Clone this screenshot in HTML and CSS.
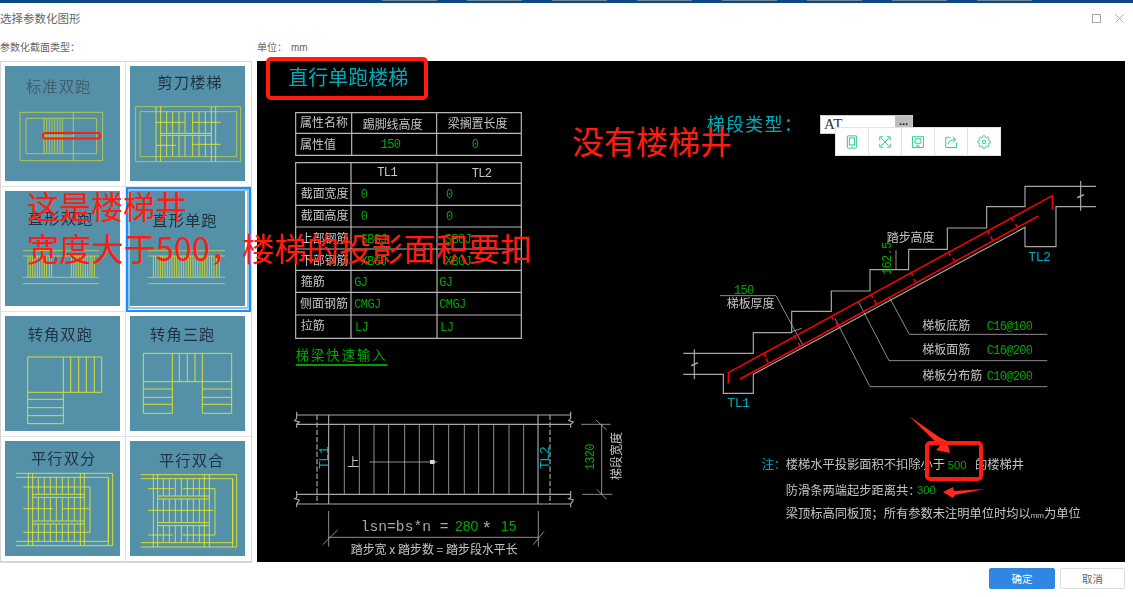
FILE: index.html
```html
<!DOCTYPE html>
<html lang="zh-CN">
<head>
<meta charset="utf-8">
<title>选择参数化图形</title>
<link rel="stylesheet" href="styles.css">
</head>
<body>
<div class="dialog">
  <div class="topstrip"><i></i><i></i><i></i><i></i><i></i><i></i><i></i><i></i></div>
  <header class="titlebar">
    <span class="dialog-title">选择参数化图形</span>
    <div class="winctl">
      <span class="win-max"></span>
      <svg class="win-close" viewBox="0 0 10 10"><path d="M0.5 0.5L9.5 9.5M9.5 0.5L0.5 9.5"/></svg>
    </div>
  </header>
  <div class="labels">
    <span class="label-left">参数化截面类型：</span>
    <span class="label-unit">单位：<span class="unit-value">mm</span></span>
  </div>
  <main class="body-row">
    <section class="types">
      <div class="type"><svg class="thumb" viewBox="15 198 345 345">
        <text class="th faded" x="176" y="277" text-anchor="middle">标准双跑</text>
        <path class="yl soft" d="M60 337H308V482H60ZM78 355H290V461H78ZM220 337V482M132 355V461M140 355V461M148 355V461M156 355V461M164 355V461M172 355V461M180 355V461M187 355V461M132 408H220"/>
      </svg></div>
      <div class="type"><svg class="thumb" viewBox="390 198 345 345">
        <text class="th" x="570" y="265" text-anchor="middle">剪刀楼梯</text>
        <path class="yl soft" d="M407 320H722V485H407ZM420 335H710V470H420Z"/>
        <path class="yl" d="M468 320V485M482 320V485M634 320V485M647 320V485M482 400H634M482 406H634M500 335V400M518 335V400M537 335V400M555 335V400M578 335V400M597 335V400M616 335V400M500 406V470M518 406V470M537 406V470M555 406V470M578 406V470M597 406V470M616 406V470M468 367H555M578 367H662M468 436H528M578 433H662"/>
      </svg></div>
      <div class="type"><svg class="thumb" viewBox="15 573 345 345">
        <text class="th" x="182" y="672" text-anchor="middle">直形双跑</text>
        <path class="yl soft" d="M68 752H297M68 768H297M68 832H297M68 851H297"/>
        <path class="yl dense" d="M84 768V832M91 768V832M98 768V832M105 768V832M112 768V832M119 768V832M126 768V832M133 768V832M140 768V832M148 768V832M155 768V832M214 768V832M221 768V832M228 768V832M235 768V832M242 768V832M249 768V832M256 768V832M263 768V832M270 768V832M276 768V832M283 768V832"/>
      </svg></div>
      <div class="type selected"><svg class="thumb" viewBox="390 573 345 345">
        <text class="th" x="555" y="677" text-anchor="middle">直形单跑</text>
        <path class="yl soft" d="M443 752H675M443 768H675M443 832H675M443 851H675"/>
        <path class="yl dense" d="M460 768V832M467 768V832M474 768V832M481 768V832M488 768V832M495 768V832M502 768V832M509 768V832M516 768V832M523 768V832M530 768V832M537 768V832M544 768V832M551 768V832M558 768V832M565 768V832M572 768V832M579 768V832M586 768V832M593 768V832M600 768V832M607 768V832M614 768V832M621 768V832M628 768V832M635 768V832M642 768V832M650 768V832M658 768V832"/>
      </svg></div>
      <div class="type"><svg class="thumb" viewBox="15 48 345 345">
        <text class="th" x="181" y="119" text-anchor="middle">转角双跑</text>
        <path class="yl" d="M83 171H305V277H83ZM190 171V277M212 171V277M236 171V277M259 171V277M283 171V277M83 277V371H190V277M83 298H190M83 323H190M83 347H190"/>
      </svg></div>
      <div class="type"><svg class="thumb" viewBox="390 48 345 345">
        <text class="th" x="548" y="119" text-anchor="middle">转角三跑</text>
        <path class="yl" d="M430 160H695V245H430ZM517 160V245M538 160V245M562 160V245M585 160V245M607 160V245M430 245V340H517V245M430 267H517M430 292H517M430 313H517M607 245V340H695V245M607 267H695M607 292H695M607 313H695"/>
      </svg></div>
      <div class="type"><svg class="thumb" viewBox="15 423 345 345">
        <text class="th" x="191" y="493" text-anchor="middle">平行双分</text>
        <path class="yl" d="M48 520H338V737H48M48 532H325V724H48M325 532V737M85 520V737M98 520V737M241 520V737M253 520V737M115 532V583M133 532V583M151 532V583M169 532V583M187 532V583M205 532V583M223 532V583M115 592V663M133 592V663M151 592V663M169 592V663M187 592V663M205 592V663M223 592V663M115 672V724M133 672V724M151 672V724M169 672V724M187 672V724M205 672V724M223 672V724M70 561H270V697H70M98 583H253M98 592H253M98 663H253M98 672H253M70 626H160M187 626H268"/>
      </svg></div>
      <div class="type"><svg class="thumb" viewBox="390 423 345 345">
        <text class="th" x="575" y="497" text-anchor="middle">平行双合</text>
        <path class="yl" d="M422 524H710V741H422M422 536H698V728H422M698 536V741M460 524V741M473 524V741M613 524V741M628 524V741M490 536V588M508 536V588M526 536V588M544 536V588M562 536V588M580 536V588M598 536V588M490 597V668M508 597V668M526 597V668M544 597V668M562 597V668M580 597V668M598 597V668M490 677V728M508 677V728M526 677V728M544 677V728M562 677V728M580 677V728M598 677V728M445 566H522M548 566H645V705H548M445 705H518M473 588H628M473 597H628M473 668H628M473 677H628M445 631H640"/>
      </svg></div>
    </section>
    <section class="canvas">
      <svg class="drawing" viewBox="257 61 868 501">
        <g transform="translate(260 50) scale(.33333)">
          <text class="cy big" x="85" y="105">直行单跑楼梯</text>
          <path class="grid" d="M107 188H784V316H107ZM275 188V316M530 188V316M107 250H784"/>
          <text class="wt" x="120" y="232">属性名称</text>
          <text class="wt" x="308" y="238">踢脚线高度</text>
          <text class="wt" x="563" y="235">梁搁置长度</text>
          <text class="wt" x="120" y="296">属性值</text>
          <text class="gn mono" x="362" y="294">150</text>
          <text class="gn mono" x="635" y="294">0</text>
          <path class="grid" d="M107 338H784V865H107ZM273 338V865M531 338V865M107 400H784M107 466H784M107 531H784M107 597H784M107 661H784M107 727H784M107 795H784"/>
          <text class="wm mono" x="352" y="379">TL1</text>
          <text class="wm mono" x="635" y="382">TL2</text>
          <text class="wt" x="122" y="443">截面宽度</text>
          <text class="gn mono" x="302" y="443">0</text>
          <text class="gn mono" x="558" y="443">0</text>
          <text class="wt" x="122" y="509">截面高度</text>
          <text class="gn mono" x="302" y="509">0</text>
          <text class="gn mono" x="558" y="509">0</text>
          <text class="wt" x="122" y="578">上部钢筋</text>
          <text class="gn mono" x="302" y="578">SBGJ</text>
          <text class="gn mono" x="555" y="578">SBGJ</text>
          <text class="wt" x="122" y="644">下部钢筋</text>
          <text class="gn mono" x="302" y="644">XBGJ</text>
          <text class="gn mono" x="555" y="644">XBGJ</text>
          <text class="wt" x="122" y="709">箍筋</text>
          <text class="gn mono" x="283" y="707">GJ</text>
          <text class="gn mono" x="538" y="707">GJ</text>
          <text class="wt" x="120" y="775">侧面钢筋</text>
          <text class="gn mono" x="283" y="775">CMGJ</text>
          <text class="gn mono" x="538" y="775">CMGJ</text>
          <text class="wt" x="122" y="841">拉筋</text>
          <text class="gn mono" x="285" y="842">LJ</text>
          <text class="gn mono" x="541" y="842">LJ</text>
          <text class="gn quick" x="107" y="931">梯梁快速输入</text>
          <path class="under" d="M107 945H382"/>
        </g>
        <g transform="translate(270 390) scale(.33333)">
          <path class="cad" d="M80 75H902M80 103H902M80 313H902M80 342H902M176 75V342M804 75V342M80 65V85L74 92L88 96L80 103V113M80 303V323L74 326L88 330L80 342V352M902 65V85L896 92L910 96L902 103V113M902 303V323L896 326L910 330L902 342V352"/>
          <path class="cad dash" d="M141 75V342M840 75V342"/>
          <path class="cad thin" d="M223 103V313M268 103V313M312 103V313M356 103V313M404 103V313M448 103V313M491 103V313M536 103V313M583 103V313M626 103V313M671 103V313M717 103V313M761 103V313M298 216H503M933 103H1022M937 313H1027M995 103V313M978 90L1010 120M980 298L1010 328M176 363V470M805 363V470M176 442H805M158 464L203 420M790 464L822 424"/>
          <rect class="pt" x="480" y="210" width="14" height="12"/>
          <text class="wt" x="232" y="232">上</text>
          <text class="cy mono tl" transform="translate(175 237) rotate(-90)">TL1</text>
          <text class="cy mono tl" transform="translate(838 237) rotate(-90)">TL2</text>
          <text class="gn mono" transform="translate(973 241) rotate(-90)">1320</text>
          <text class="wt" transform="translate(1054 270) rotate(-90)">梯段宽度</text>
          <text class="formula-mono fg" x="272" y="423">lsn=bs*n =</text>
          <text class="formula gn" x="555" y="423">280</text>
          <text class="formula star fg" x="640" y="432">*</text>
          <text class="formula gn" x="693" y="423">15</text>
          <text class="wt" x="242" y="491">踏步宽 x 踏步数 = 踏步段水平长</text>
        </g>
        <g transform="translate(670 100) scale(.33333)">
          <text class="cy seg" x="110" y="92">梯段类型：</text>
          <path class="cad" d="M40 760H250V698H365V634H484V573H600V509H716V448H832V384H950V320H1065V259H1278M40 823H160V880H250V823L1065 382V440H1158V320H1278M73 748V838M64 798L84 788L64 796M1232 243V332M1222 294L1242 284L1222 292"/>
          <path class="cad thin" d="M150 587H318L400 738M365 695L395 685M495 655L600 860H1132M565 605L657 782H1132M657 590L718 703H1132M678 450V507"/>
          <path class="rb" d="M175 850V818L1147 287V328M210 837L1105 348"/>
          <path class="rd" d="M282 760L288 772M288 776L295 788M372 706L378 718M385 729L392 741M484 648L490 660M499 669L505 681M602 582L608 594M613 600L619 612M722 515L728 527M732 537L738 549M835 455L841 467M849 474L855 486M952 391L958 403M962 409L968 421M1024 351L1030 363M1037 372L1043 384"/>
          <text class="wt" x="650" y="426">踏步高度</text>
          <text class="gn mono" transform="translate(663 525) rotate(-90)">162.5</text>
          <text class="gn mono" x="192" y="582">150</text>
          <text class="wt" x="170" y="623">梯板厚度</text>
          <text class="wt" x="757" y="690">梯板底筋</text>
          <text class="gn mono" x="950" y="689">C16@100</text>
          <text class="wt" x="757" y="761">梯板面筋</text>
          <text class="gn mono" x="950" y="763">C16@200</text>
          <text class="wt" x="757" y="841">梯板分布筋</text>
          <text class="gn mono" x="950" y="841">C10@200</text>
          <text class="cy mono tl" x="172" y="921">TL1</text>
          <text class="cy mono tl" x="1075" y="483">TL2</text>
        </g>
        <g transform="translate(740 405) scale(.33333)">
          <text class="cy note" x="65" y="193">注：</text>
          <text class="wt note" x="137" y="193">楼梯水平投影面积不扣除小于</text>
          <text class="gn latin" x="623" y="191">500</text>
          <text class="wt note" x="705" y="193">的楼梯井</text>
          <text class="wt note" x="137" y="269">防滑条两端起步距离共：</text>
          <text class="gn latin" x="531" y="267">300</text>
          <text class="wt note" x="137" y="340">梁顶标高同板顶；所有参数未注明单位时均以<tspan class="narrow">mm</tspan>为单位</text>
        </g>
      </svg>
      <div class="segtype">
        <span class="segvalue">AT</span>
        <span class="segmore">...</span>
      </div>
      <div class="toolbar">
        <span class="tool"><svg viewBox="0 0 24 24"><rect x="4" y="1.500" width="16" height="21" rx="1"/><rect x="7.500" y="5" width="9" height="12"/><path d="M11 20H13"/></svg></span>
        <span class="tool"><svg viewBox="0 0 24 24"><path d="M5 5L19 19M19 5L5 19M3 9V3H9M15 3H21V9M21 15V21H15M9 21H3V15"/></svg></span>
        <span class="tool"><svg viewBox="0 0 24 24"><path d="M2.500 3H21.500V21.500H2.500ZM7 6.500H17V14H7ZM10 21.500V17.500H13.500V21.500"/></svg></span>
        <span class="tool"><svg viewBox="0 0 24 24"><path d="M11 4H3V21.500H21.500V13M7 16C8 10 12 8 19 8M15 3L20.500 8L15 13"/></svg></span>
        <span class="tool"><svg viewBox="0 0 24 24"><circle cx="12" cy="12" r="3"/><path d="M19.4 15a1.65 1.65 0 0 0 .33 1.82l.06.06a2 2 0 0 1 0 2.83 2 2 0 0 1-2.83 0l-.06-.06a1.65 1.65 0 0 0-1.82-.33 1.65 1.65 0 0 0-1 1.51V21a2 2 0 0 1-2 2 2 2 0 0 1-2-2v-.09A1.65 1.65 0 0 0 9 19.4a1.65 1.65 0 0 0-1.82.33l-.06.06a2 2 0 0 1-2.83 0 2 2 0 0 1 0-2.83l.06-.06a1.65 1.65 0 0 0 .33-1.82 1.65 1.65 0 0 0-1.51-1H3a2 2 0 0 1-2-2 2 2 0 0 1 2-2h.09A1.65 1.65 0 0 0 4.6 9a1.65 1.65 0 0 0-.33-1.82l-.06-.06a2 2 0 0 1 0-2.83 2 2 0 0 1 2.83 0l.06.06a1.65 1.65 0 0 0 1.82.33H9a1.65 1.65 0 0 0 1-1.51V3a2 2 0 0 1 2-2 2 2 0 0 1 2 2v.09a1.65 1.65 0 0 0 1 1.51 1.65 1.65 0 0 0 1.82-.33l.06-.06a2 2 0 0 1 2.83 0 2 2 0 0 1 0 2.83l-.06.06a1.65 1.65 0 0 0-.33 1.82V9a1.65 1.65 0 0 0 1.51 1H21a2 2 0 0 1 2 2 2 2 0 0 1-2 2h-.09a1.65 1.65 0 0 0-1.51 1z"/></svg></span>
      </div>
    </section>
  </main>
  <footer class="actions">
    <button class="btn primary" type="button">确定</button>
    <button class="btn" type="button">取消</button>
  </footer>
  <svg class="annotations" viewBox="0 0 1133 597">
    <rect class="mark" x="43" y="133" width="57" height="5.500" rx="2"/>
    <rect class="mark thick" x="268" y="59" width="158" height="39" rx="3"/>
    <path class="mark-fill" d="M909 416L939 437L947 441L950 453L936 450L940 446Z"/>
    <path class="mark-fill" d="M985 489L954 491L953 487L943 492L953 498L955 495Z"/>
    <rect class="mark thick" x="927" y="443" width="54" height="36" rx="3"/>
    <text class="red" x="572" y="154">没有楼梯井</text>
    <text class="red" x="27" y="219">这是楼梯井</text>
    <text class="red wide" x="27" y="261">宽度大于500，楼梯的投影面积要扣</text>
  </svg>
</div>
</body>
</html>
```
FILE: styles.css
```css
* { box-sizing: border-box; }
html, body { margin: 0; padding: 0; background: #fff; overflow: hidden; }
body { font-family: "Noto Sans CJK SC", "Liberation Sans", sans-serif; }

.dialog { position: relative; width: 1133px; height: 597px; display: flex; flex-direction: column; }
.topstrip { height: 3px; background: #0b4a82; display: flex; gap: 30px; padding-left: 382px; }
.topstrip i { display: block; width: 55px; height: 1px; background: #6f8497; }

.titlebar { height: 30px; display: flex; align-items: center; justify-content: space-between; padding-right: 9px; }
.dialog-title { font-size: 11.500px; color: #666; }
.winctl { display: flex; align-items: center; gap: 14px; }
.win-max { width: 9px; height: 9px; border: 1px solid #a8a8a8; display: block; }
.win-close { width: 9px; height: 9px; display: block; }
.win-close path { stroke: #a8a8a8; stroke-width: 1; fill: none; }

.labels { height: 28px; padding-bottom: 2px; display: flex; align-items: center; font-size: 10px; color: #666; }
.label-left { width: 257px; }
.unit-value { margin-left: 4px; font-family: "Liberation Sans", sans-serif; }

.body-row { display: flex; gap: 5px; height: 502px; align-items: flex-start; }

.types { width: 252px; height: 502px; border: 1px solid #d6d6d6; border-bottom-width: 2px; display: grid; grid-template-columns: 125px 125px; grid-template-rows: repeat(4, 125px); }
.type { position: relative; padding: 4px; border-right: 1px solid #e2e2e2; border-bottom: 1px solid #e2e2e2; }
.type:nth-child(even) { border-right: 0; }
.type:nth-child(n+7) { border-bottom: 0; }
.type.selected { outline: 2px solid #1a90ff; outline-offset: -2px; border-color: transparent; }
.type.selected::after { content: ""; position: absolute; inset: 2px; border: 2px solid #8fc4f0; }
.thumb { display: block; width: 115px; height: 115px; background: #5590a9; filter: blur(.3px); }
.th { font-size: 46px; letter-spacing: 3px; fill: #1f3242; }
.th.faded { fill: #41606f; }
.yl { fill: none; stroke: #e6ea26; stroke-width: 2.600; }
.yl.soft { stroke: #bdd245; }
.yl.dense { stroke: #cddc3c; }

.canvas { position: relative; width: 868px; height: 501px; background: #000; }
.drawing { display: block; width: 868px; height: 501px; filter: blur(.3px); }
.drawing text { font-size: 36px; }
.drawing .wt { fill: #c4c4c4; }
.drawing .wm { fill: #c8c8c8; }
.drawing .gn { fill: #00a800; }
.drawing .cy { fill: #00aab8; }
.drawing .fg { fill: #a8a8a8; }
.drawing .big { font-size: 60px; }
.drawing .seg { font-size: 54px; letter-spacing: 4px; }
.drawing .mono, .drawing .wm { font-family: "Liberation Mono", monospace; font-size: 36px; letter-spacing: -2px; }
.drawing .tl { font-size: 40px; }
.drawing .latin { font-family: "Liberation Sans", sans-serif; font-size: 34px; }
.drawing .quick { font-size: 40px; letter-spacing: 6px; }
.drawing .note { font-size: 36.800px; }
.drawing .narrow { font-family: "Liberation Sans", sans-serif; font-size: 24px; }
.drawing .formula { font-family: "Liberation Sans", sans-serif; font-size: 42px; }
.drawing .star { font-size: 54px; }
.drawing .formula-mono { font-family: "Liberation Mono", monospace; font-size: 44px; }
.grid { fill: none; stroke: #b8b8b8; stroke-width: 3.500; }
.under { stroke: #00d000; stroke-width: 4; fill: none; }
.cad { fill: none; stroke: #a8a8a8; stroke-width: 3.500; }
.cad.thin { stroke-width: 2.500; }
.cad.dash { stroke-dasharray: 16 6; }
.pt { fill: #d8d8d8; }
.rb { fill: none; stroke: #f00; stroke-width: 4.500; }
.rd { fill: none; stroke: #e00; stroke-width: 5; }

.segtype { position: absolute; left: 563px; top: 54px; width: 93px; height: 19px; background: #fff; border: 1px solid #ccc; display: flex; justify-content: space-between; }
.segvalue { font-family: "Liberation Serif", serif; font-size: 15px; line-height: 17px; color: #333; padding-left: 3px; }
.segmore { width: 17px; background: #bdbdbd; color: #222; font-family: "Liberation Sans", sans-serif; font-size: 11px; font-weight: 700; line-height: 11px; text-align: center; }

.toolbar { position: absolute; left: 578px; top: 66px; width: 166px; height: 29px; background: #fff; border: 1px solid #dfe5e2; display: flex; }
.tool { flex: 1; display: flex; align-items: center; justify-content: center; border-right: 1px solid #dfe5e2; }
.tool:last-child { border-right: 0; }
.tool svg { width: 14px; height: 14px; fill: none; stroke: #22c77f; stroke-width: 1.600; }

.actions { flex: 1; display: flex; justify-content: flex-end; align-items: flex-start; gap: 5px; padding: 5px 8px 0 0; }
.btn { width: 65px; height: 21px; padding: 0; background: #fff; border: 1px solid #ddd; border-radius: 2px; font-family: inherit; font-size: 10.500px; color: #666; }
.btn.primary { width: 66px; background: #2f87e2; border-color: #2f87e2; color: #fff; }

.annotations { position: absolute; left: 0; top: 0; width: 1133px; height: 597px; pointer-events: none; }
.mark { fill: none; stroke: #ff1c10; stroke-width: 2; }
.mark.thick { stroke-width: 4; }
.mark-fill { fill: #ff2a20; }
.red { font-size: 32px; fill: #ff1c10; }
.red.wide { letter-spacing: .25px; }
```
